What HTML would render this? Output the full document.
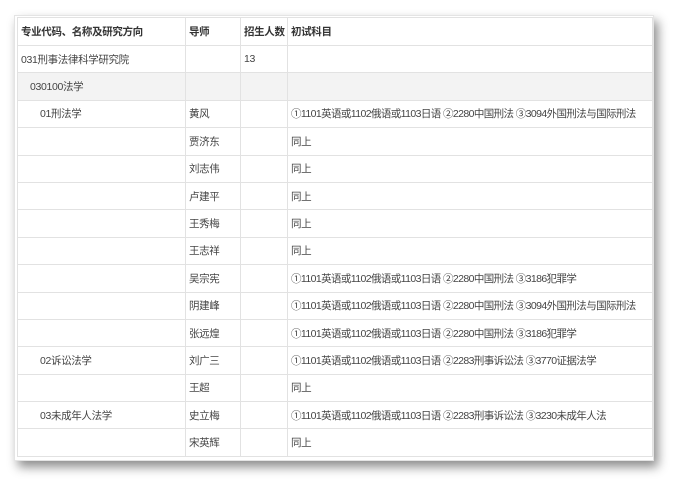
<!DOCTYPE html>
<html><head><meta charset="utf-8"><style>
body{margin:0;width:690px;height:496px;background:#fff;overflow:hidden;position:relative;font-family:"Liberation Sans","Noto Sans CJK SC",sans-serif;}
.card{position:absolute;left:14px;top:15px;width:640px;height:446px;background:#fff;box-shadow:4px 6px 10px rgba(0,0,0,0.45);border:1px solid #e4e4e4;box-sizing:border-box}
table{position:absolute;left:17px;top:17px;width:635px;border-collapse:collapse;font-size:10.5px;letter-spacing:-0.35px;color:#444;table-layout:fixed}
td{border:1px solid #e2e2e2;height:26.4px;padding:0 0 0 3px;white-space:nowrap;overflow:hidden}
td.s{letter-spacing:-0.6px}
tr.h td{height:27px;font-weight:bold;color:#333}
tr.g td{background:#f3f3f3}
.l2{padding-left:12px}.l3{padding-left:22px}
</style></head><body>
<div class="card"></div>
<table>
<colgroup><col style="width:168px"><col style="width:55px"><col style="width:47px"><col style="width:365px"></colgroup>
<tr class="h"><td>专业代码、名称及研究方向</td><td>导师</td><td>招生人数</td><td>初试科目</td></tr>
<tr><td>031刑事法律科学研究院</td><td></td><td>13</td><td></td></tr>
<tr class="g"><td class="l2">030100法学</td><td></td><td></td><td></td></tr>
<tr><td class="l3">01刑法学</td><td>黄风</td><td></td><td class="s">①1101英语或1102俄语或1103日语 ②2280中国刑法 ③3094外国刑法与国际刑法</td></tr>
<tr><td></td><td>贾济东</td><td></td><td>同上</td></tr>
<tr><td></td><td>刘志伟</td><td></td><td>同上</td></tr>
<tr><td></td><td>卢建平</td><td></td><td>同上</td></tr>
<tr><td></td><td>王秀梅</td><td></td><td>同上</td></tr>
<tr><td></td><td>王志祥</td><td></td><td>同上</td></tr>
<tr><td></td><td>吴宗宪</td><td></td><td class="s">①1101英语或1102俄语或1103日语 ②2280中国刑法 ③3186犯罪学</td></tr>
<tr><td></td><td>阴建峰</td><td></td><td class="s">①1101英语或1102俄语或1103日语 ②2280中国刑法 ③3094外国刑法与国际刑法</td></tr>
<tr><td></td><td>张远煌</td><td></td><td class="s">①1101英语或1102俄语或1103日语 ②2280中国刑法 ③3186犯罪学</td></tr>
<tr><td class="l3">02诉讼法学</td><td>刘广三</td><td></td><td class="s">①1101英语或1102俄语或1103日语 ②2283刑事诉讼法 ③3770证据法学</td></tr>
<tr><td></td><td>王超</td><td></td><td>同上</td></tr>
<tr><td class="l3">03未成年人法学</td><td>史立梅</td><td></td><td class="s">①1101英语或1102俄语或1103日语 ②2283刑事诉讼法 ③3230未成年人法</td></tr>
<tr><td></td><td>宋英辉</td><td></td><td>同上</td></tr>
</table>
</body></html>
